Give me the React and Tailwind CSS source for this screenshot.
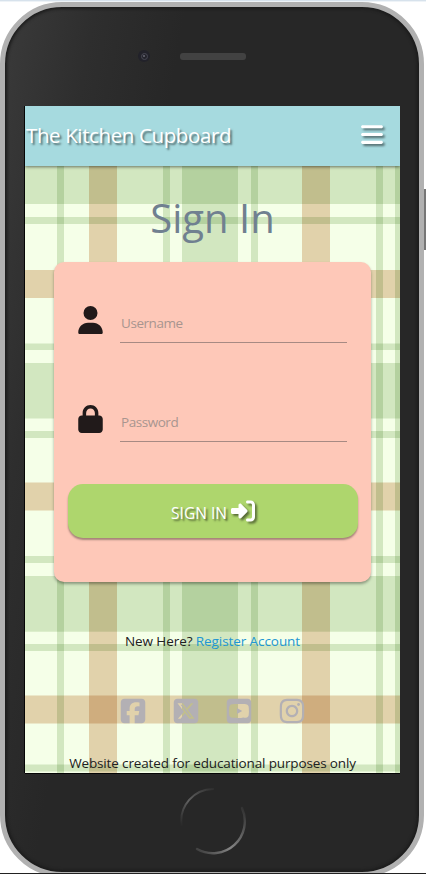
import React from 'react';
import { FaUser, FaLock, FaBars, FaRightToBracket, FaSquareFacebook, FaSquareXTwitter, FaSquareYoutube, FaInstagram } from 'react-icons/fa6';

const GREEN = '#dbe7d3';
const BROWN = '#ebd2bc';

// [start, size, colour], measured from the screen's top left corner
const COLUMNS = [
  [32, 7, GREEN], [64, 28, BROWN], [138, 7, GREEN], [157, 56, GREEN],
  [226, 7, GREEN], [277, 28, BROWN], [351, 7, GREEN], [370, 7, GREEN],
];
const ROWS = [
  [42, 56, GREEN], [111, 7, GREEN], [164, 28, BROWN], [237.5, 6.5, GREEN],
  [257, 55.5, GREEN], [325, 7, GREEN], [376.5, 28, BROWN], [450, 7, GREEN],
  [470, 55.7, GREEN], [538, 7, GREEN], [589.5, 28, BROWN], [658.5, 7, GREEN],
];

// The first wide band starts under the header
const BANDS = [[0, 98, GREEN], ...ROWS.slice(1)];

function Plaid() {
  return (
    <svg className="absolute inset-0 isolate" width="375" height="667" aria-hidden="true">
      <rect width="375" height="667" fill="#f5ffe8" />
      {COLUMNS.map(([x, w, c]) => (
        <rect key={x} className="mix-blend-multiply" x={x} y="0" width={w} height="667" fill={c} />
      ))}
      {BANDS.map(([y, h, c]) => (
        <rect key={y} className="mix-blend-multiply" x="0" y={y} width="375" height={h} fill={c} />
      ))}
    </svg>
  );
}

function Field({ icon: Icon, label }) {
  return (
    <div className="flex h-[45px] items-start">
      <Icon className="mt-2 h-7 w-[25px] shrink-0 text-[#211a1a]" />
      <div className="ml-[17px] flex h-[45px] w-[227px] items-center border-b border-[#a78a83] pl-px pt-1.5 text-[13.5px] tracking-[-0.45px] text-[#a8958f]">
        {label}
      </div>
    </div>
  );
}

function PhoneTop() {
  return (
    <div className="flex h-[99px] items-start pl-[133px] pt-[43px]">
      <div className="flex h-3 w-3 items-center justify-center rounded-full bg-[#22222a]">
        <div className="flex h-[7px] w-[7px] items-center justify-center rounded-full border border-[#484854] bg-[#24242c]">
          <div className="h-0.5 w-0.5 rounded-full bg-[#6a6a76]" />
        </div>
      </div>
      <div className="ml-[30px] mt-[3px] h-[7px] w-[66px] rounded-[3px] bg-[#343434] bg-[radial-gradient(#525252_0.6px,transparent_0.8px)] bg-[length:2px_2px]" />
    </div>
  );
}

function HomeButton() {
  return (
    <svg className="ml-[174px] mt-[14px]" width="68" height="68" fill="none" strokeLinecap="round">
      <defs>
        <linearGradient id="arcA" x1="0" y1="1" x2="1" y2="0">
          <stop offset="0" stopColor="#292929" /><stop offset=".45" stopColor="#606060" /><stop offset="1" stopColor="#303030" />
        </linearGradient>
        <linearGradient id="arcB" x1="0" y1="1" x2="1" y2="0">
          <stop offset="0" stopColor="#3a3a3a" /><stop offset=".4" stopColor="#858585" /><stop offset="1" stopColor="#303030" />
        </linearGradient>
      </defs>
      <path d="M2.5 38A32 32 0 0 1 34 2" stroke="url(#arcA)" strokeWidth="2" />
      <path d="M63 21A32 32 0 0 1 18 62" stroke="url(#arcB)" strokeWidth="2.4" />
    </svg>
  );
}

export default function App() {
  return (
    <div className="relative h-[874px] w-[426px] overflow-hidden bg-white font-['Open_Sans','Noto_Sans',sans-serif]">
      <div className="h-0.5 border-b border-[#eef3f7] bg-[#d7e2ec]" />
      <div className="absolute left-[424px] top-[189px] h-[61px] w-0.5 bg-[#777]" />
      <div className="h-[875px] w-[424px] rounded-[62px] border-[5px] border-[#b1b1b1] bg-[linear-gradient(100deg,#3a3a3a_0%,#2e2e2e_16%,#272727_32%,#272727_100%)] shadow-[inset_0_0_3px_2px_#1c1c1c]">
        <PhoneTop />
        <div className="relative ml-5 h-[667px] w-[375px] overflow-hidden shadow-[-1px_0_0_#050505,0_1px_0_#050505]">
          <Plaid />
          <div className="relative flex h-full flex-col">
            <header className="flex h-[60px] shrink-0 items-center justify-between bg-[#a6dadf] pl-px pr-[17px] text-white shadow-[0_1px_3px_rgba(0,0,0,0.5)]">
              <span className="pb-0.5 text-[20.5px] tracking-[-0.38px] [text-shadow:2px_2px_2px_rgba(0,0,0,0.5)]">The Kitchen Cupboard</span>
              <FaBars className="mb-1 h-[25px] w-[22px] drop-shadow-[2px_2px_1px_rgba(0,0,0,0.5)]" />
            </header>
            <h1 className="mt-6 h-[56px] shrink-0 text-center text-[40px] leading-[56px] text-[#708090]">Sign In</h1>
            <section className="mx-auto mt-4 flex h-[320px] w-[317px] shrink-0 flex-col rounded-[10px] bg-[#fec8b8] shadow-[0_2px_3px_rgba(0,0,0,0.35)]">
              <div className="flex flex-col gap-[54px] pl-6 pt-9">
                <Field icon={FaUser} label="Username" />
                <Field icon={FaLock} label="Password" />
              </div>
              <button className="ml-[14px] mt-[42px] flex h-[54px] w-[290px] items-center justify-center gap-1 rounded-[15px] bg-[#aed66d] text-[15.5px] text-white shadow-[0_2px_2px_rgba(0,0,0,0.35)] [text-shadow:2px_2px_2px_rgba(0,0,0,0.5)]">
                <span className="pt-1.5">SIGN IN</span>
                <FaRightToBracket className="h-6 w-6 drop-shadow-[2px_2px_1px_rgba(0,0,0,0.5)]" />
              </button>
            </section>
            <p className="mt-[49px] h-5 shrink-0 text-center text-[13.5px] leading-5 tracking-[-0.08px] text-[#202020]">
              New Here? <a className="text-[#2196d3]">Register Account</a>
            </p>
            <nav className="mt-[45.5px] flex h-[28px] shrink-0 gap-[25px] pl-[94px] text-[#b3b0b4]">
              <FaSquareFacebook className="h-7 w-7" />
              <FaSquareXTwitter className="h-7 w-7" />
              <FaSquareYoutube className="h-7 w-7" />
              <FaInstagram className="h-7 w-7" />
            </nav>
            <footer className="mt-[28.5px] whitespace-nowrap text-center text-[13.5px] leading-5 tracking-[-0.14px] text-[#202020]">
              Website created for educational purposes only
            </footer>
          </div>
        </div>
        <HomeButton />
      </div>
      <div className="absolute inset-x-0 bottom-0 h-px bg-[#222]" />
    </div>
  );
}
